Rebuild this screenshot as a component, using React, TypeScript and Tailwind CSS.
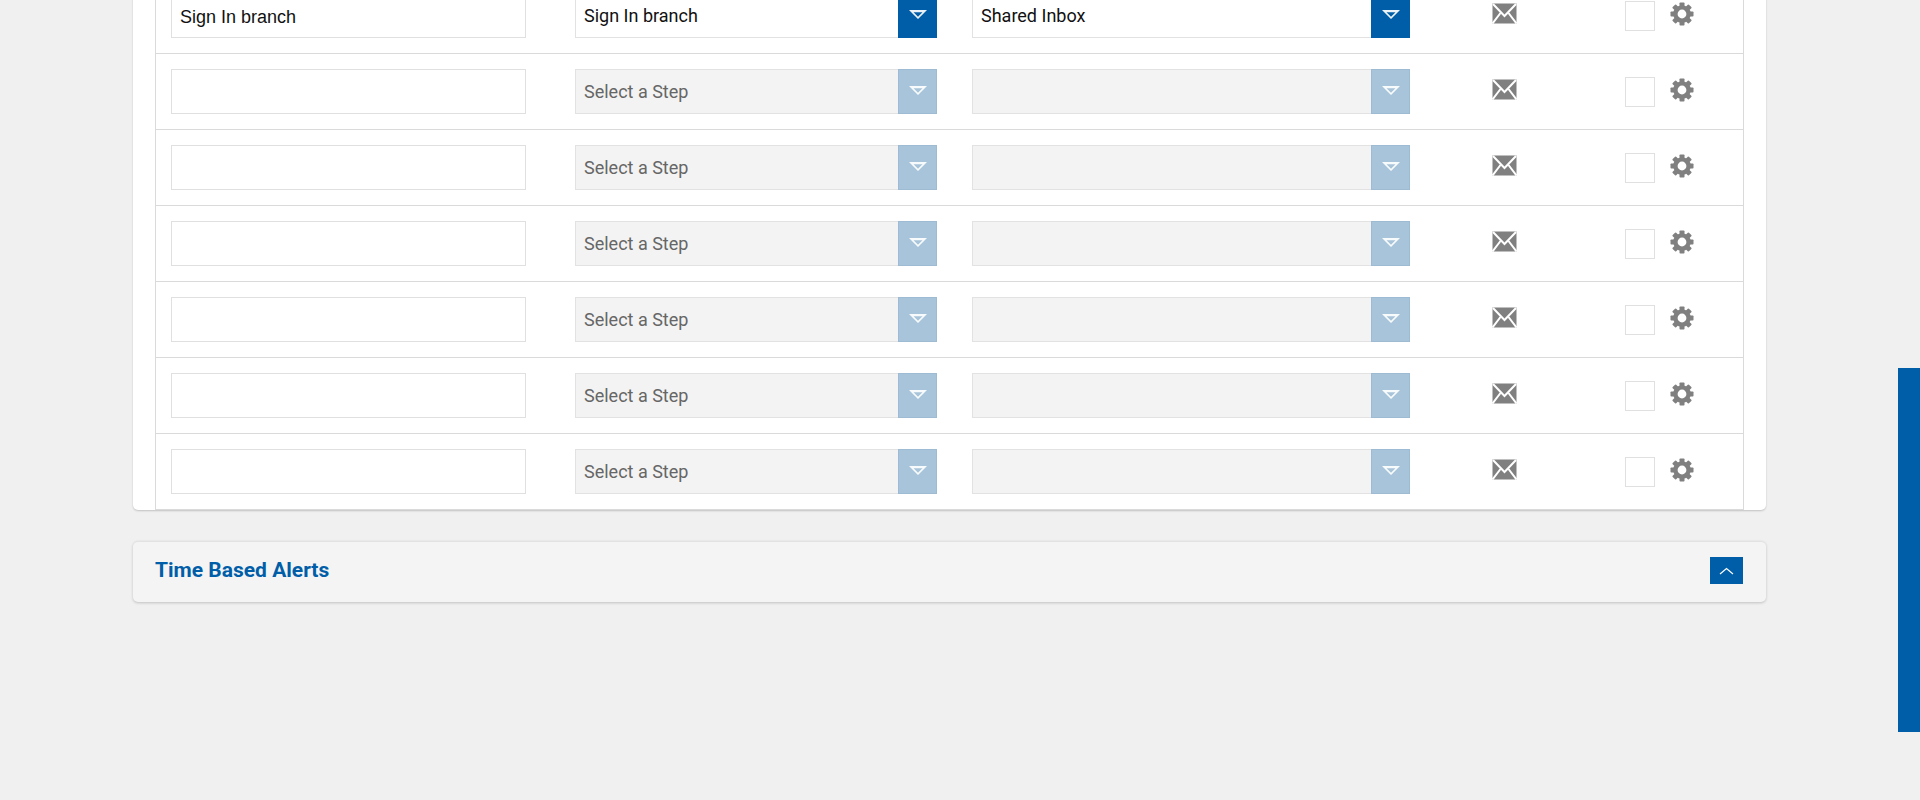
const blue = "bg-[#005ea8]";

function Tri() {
  return (
    <svg width="18" height="9" viewBox="0 0 18 9" className="block">
      <path d="M0 0 H18 L9 9 Z M4.5 2.2 L9 6.7 L13.5 2.2 Z" fill="#fff" fillRule="evenodd" opacity="0.92" />
    </svg>
  );
}

function Mail() {
  return (
    <svg width="25" height="21" viewBox="0 0 25 21" className="block">
      <rect x="0.5" y="0.5" width="24" height="20" fill="#808080" />
      <path d="M1 1 L12.5 13 L24 1" fill="none" stroke="#fff" strokeWidth="2" />
      <path d="M0.5 20.5 L8.5 10 M24.5 20.5 L16.5 10" fill="none" stroke="#fff" strokeWidth="2" />
    </svg>
  );
}

function Gear() {
  const teeth = [0, 45, 90, 135, 180, 225, 270, 315];
  return (
    <svg width="24" height="24" viewBox="0 0 24 24" className="block">
      {teeth.map((a) => (
        <rect key={a} x="9.5" y="0.5" width="5" height="6" rx="0.8" fill="#808080" transform={`rotate(${a} 12 12)`} />
      ))}
      <circle cx="12" cy="12" r="6.6" fill="none" stroke="#808080" strokeWidth="4.4" />
    </svg>
  );
}

function Select({ width, text, active }: { width: string; text: string; active: boolean }) {
  return (
    <div className={`flex h-[45px] shrink-0 ${width} ${active ? "bg-white" : "bg-[#f3f3f3]"}`}>
      <div
        className={`flex-1 min-w-0 flex items-center pl-[8px] border border-r-0 border-[#e2e2e2] text-[18px] font-['Roboto',sans-serif] ${
          active ? "text-[#111]" : "text-[#666]"
        }`}
      >
        {text}
      </div>
      <div className={`w-[39px] shrink-0 flex items-center justify-center pb-[3px] ${active ? "bg-[#005ea8]" : "bg-[#a8c4da] border border-[#9dbbd3]"}`}>
        <Tri />
      </div>
    </div>
  );
}

function Row({ active }: { active: boolean }) {
  return (
    <div className="flex h-[76px] border-b border-[#dadada] pl-[15px] pt-[15px]">
      <div className="w-[355px] shrink-0 h-[45px] border border-[#e0e0e0] bg-white flex items-center pl-[8px] pt-[3px] text-[18px] text-[#111]">
        {active ? "Sign In branch" : ""}
      </div>
      <div className="ml-[49px]">
        <Select width="w-[362px]" text={active ? "Sign In branch" : "Select a Step"} active={active} />
      </div>
      <div className="ml-[35px]">
        <Select width="w-[438px]" text={active ? "Shared Inbox" : ""} active={active} />
      </div>
      <div className="ml-[82px] mt-[10px]">
        <Mail />
      </div>
      <div className="ml-[108px] mt-[8px] w-[30px] h-[30px] shrink-0 border border-[#e0e0e0] bg-white" />
      <div className="ml-[15px] mt-[9px]">
        <Gear />
      </div>
    </div>
  );
}

export default function App() {
  const rows = [true, false, false, false, false, false, false];
  return (
    <div className="relative h-[800px] overflow-hidden bg-[#f0f0f0] font-['Liberation_Sans',Arial,sans-serif]">
      <div className="ml-[133px] w-[1633px] -mt-[22px]">
        <div className="bg-white rounded-b-[5px] shadow-[0_1px_2px_rgba(0,0,0,0.2)] px-[22px]">
          <div className="border-x border-[#dadada]">
            {rows.map((r, i) => (
              <Row key={i} active={r} />
            ))}
          </div>
        </div>
        <div className="mt-[31px] h-[61px] bg-[#f4f4f4] rounded-[5px] border-t border-[#e2e2e2] shadow-[0_1px_3px_rgba(0,0,0,0.2)] flex items-center justify-between pl-[22px] pr-[23px]">
          <span className="mb-[2px] font-['Roboto',sans-serif] font-bold text-[21px] text-[#005ea8]">Time Based Alerts</span>
          <button className={`mb-[3px] w-[33px] h-[27px] ${blue} flex items-center justify-center`}>
            <svg width="15" height="8" viewBox="0 0 15 8">
              <path d="M1 7 L7.5 1.5 L14 7" fill="none" stroke="#fff" strokeWidth="1.2" />
            </svg>
          </button>
        </div>
      </div>
      <div className={`fixed right-0 top-[368px] w-[22px] h-[364px] ${blue}`} />
    </div>
  );
}
